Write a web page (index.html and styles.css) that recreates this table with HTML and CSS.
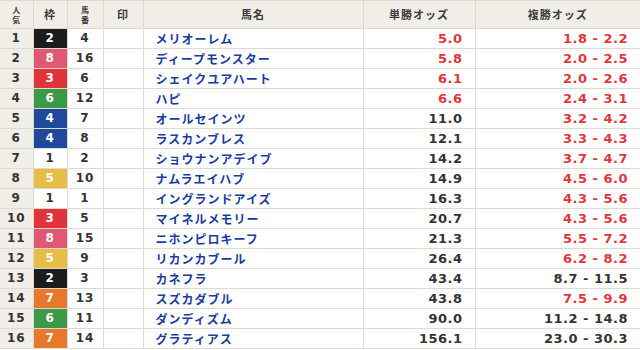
FILE: index.html
```html
<!DOCTYPE html>
<html lang="ja">
<head>
<meta charset="utf-8">
<link rel="stylesheet" href="styles.css">
</head>
<body>
<table class="odds">
  <colgroup>
    <col class="c-pop"><col class="c-frame"><col class="c-num"><col class="c-mark"><col class="c-name"><col class="c-win"><col class="c-place">
  </colgroup>
  <thead>
    <tr>
      <th class="stack"><span class="line">人</span><span class="line">気</span></th>
      <th>枠</th>
      <th class="stack"><span class="line">馬</span><span class="line">番</span></th>
      <th>印</th>
      <th>馬名</th>
      <th>単勝オッズ</th>
      <th>複勝オッズ</th>
    </tr>
  </thead>
  <tbody>
    <tr><td class="pop">1</td><td class="frame f2">2</td><td class="num">4</td><td></td><td class="name">メリオーレム</td><td class="odds-win hot">5.0</td><td class="odds-place hot">1.8 - 2.2</td></tr>
    <tr><td class="pop">2</td><td class="frame f8">8</td><td class="num">16</td><td></td><td class="name">ディープモンスター</td><td class="odds-win hot">5.8</td><td class="odds-place hot">2.0 - 2.5</td></tr>
    <tr><td class="pop">3</td><td class="frame f3">3</td><td class="num">6</td><td></td><td class="name">シェイクユアハート</td><td class="odds-win hot">6.1</td><td class="odds-place hot">2.0 - 2.6</td></tr>
    <tr><td class="pop">4</td><td class="frame f6">6</td><td class="num">12</td><td></td><td class="name">ハピ</td><td class="odds-win hot">6.6</td><td class="odds-place hot">2.4 - 3.1</td></tr>
    <tr><td class="pop">5</td><td class="frame f4">4</td><td class="num">7</td><td></td><td class="name">オールセインツ</td><td class="odds-win">11.0</td><td class="odds-place hot">3.2 - 4.2</td></tr>
    <tr><td class="pop">6</td><td class="frame f4">4</td><td class="num">8</td><td></td><td class="name">ラスカンブレス</td><td class="odds-win">12.1</td><td class="odds-place hot">3.3 - 4.3</td></tr>
    <tr><td class="pop">7</td><td class="frame f1">1</td><td class="num">2</td><td></td><td class="name">ショウナンアデイブ</td><td class="odds-win">14.2</td><td class="odds-place hot">3.7 - 4.7</td></tr>
    <tr><td class="pop">8</td><td class="frame f5">5</td><td class="num">10</td><td></td><td class="name">ナムラエイハブ</td><td class="odds-win">14.9</td><td class="odds-place hot">4.5 - 6.0</td></tr>
    <tr><td class="pop">9</td><td class="frame f1">1</td><td class="num">1</td><td></td><td class="name">イングランドアイズ</td><td class="odds-win">16.3</td><td class="odds-place hot">4.3 - 5.6</td></tr>
    <tr><td class="pop">10</td><td class="frame f3">3</td><td class="num">5</td><td></td><td class="name">マイネルメモリー</td><td class="odds-win">20.7</td><td class="odds-place hot">4.3 - 5.6</td></tr>
    <tr><td class="pop">11</td><td class="frame f8">8</td><td class="num">15</td><td></td><td class="name">ニホンピロキーフ</td><td class="odds-win">21.3</td><td class="odds-place hot">5.5 - 7.2</td></tr>
    <tr><td class="pop">12</td><td class="frame f5">5</td><td class="num">9</td><td></td><td class="name">リカンカブール</td><td class="odds-win">26.4</td><td class="odds-place hot">6.2 - 8.2</td></tr>
    <tr><td class="pop">13</td><td class="frame f2">2</td><td class="num">3</td><td></td><td class="name">カネフラ</td><td class="odds-win">43.4</td><td class="odds-place">8.7 - 11.5</td></tr>
    <tr><td class="pop">14</td><td class="frame f7">7</td><td class="num">13</td><td></td><td class="name">スズカダブル</td><td class="odds-win">43.8</td><td class="odds-place hot">7.5 - 9.9</td></tr>
    <tr><td class="pop">15</td><td class="frame f6">6</td><td class="num">11</td><td></td><td class="name">ダンディズム</td><td class="odds-win">90.0</td><td class="odds-place">11.2 - 14.8</td></tr>
    <tr><td class="pop">16</td><td class="frame f7">7</td><td class="num">14</td><td></td><td class="name">グラティアス</td><td class="odds-win">156.1</td><td class="odds-place">23.0 - 30.3</td></tr>
  </tbody>
</table>
</body>
</html>
```
FILE: styles.css
```css
html, body {
  margin: 0;
  padding: 0;
  background: #ffffff;
}
body {
  font-family: "Noto Sans CJK JP", "Noto Sans", sans-serif;
  color: #333333;
  overflow: hidden;
}
.odds {
  width: 640px;
  border-collapse: collapse;
  table-layout: fixed;
}
.c-pop { width: 33px; }
.c-frame { width: 34px; }
.c-num { width: 36px; }
.c-mark { width: 40px; }
.c-name { width: 220px; }
.c-win { width: 112px; }
.c-place { width: 165px; }

.odds th, .odds td {
  border: 1px solid #dedad3;
  padding: 0;
}
.odds tr > :first-child { border-left: none; }
.odds tr > :last-child { border-right: none; }

.odds th {
  background: #f1eee8;
  height: 27px;
  font-size: 11px;
  font-weight: 700;
  color: #3a3a3a;
  text-align: center;
  line-height: 13px;
  letter-spacing: 1px;
}
.odds th.stack {
  font-size: 8px;
  line-height: 10px;
  letter-spacing: 0;
}
.stack .line {
  display: block;
  height: 10px;
  line-height: 10px;
}
.odds td {
  height: 19px;
  font-family: "DejaVu Sans", "Noto Sans CJK JP", sans-serif;
  font-size: 12px;
  font-weight: 700;
  line-height: 19px;
  text-align: center;
  white-space: nowrap;
  letter-spacing: 0.5px;
}
.odds td.pop {
  background: #f1eee8;
  color: #333333;
  letter-spacing: 1px;
}
.odds td.num { color: #333333; letter-spacing: 1px; }
.odds td.name {
  font-family: "Noto Sans CJK JP", sans-serif;
  text-align: left;
  padding-left: 12px;
  color: #1b3c9c;
  letter-spacing: 1px;
  font-size: 12px;
}
.odds td.odds-win,
.odds td.odds-place {
  text-align: right;
  padding-right: 12px;
  color: #333333;
  font-size: 13px;
}
.odds td.hot { color: #e2363c; }

.frame { color: #ffffff; }
.f1 { background: #ffffff; color: #333333; }
.f2 { background: #1c1c1c; }
.f3 { background: #e0343a; }
.f4 { background: #1f4a9c; }
.f5 { background: #e6bd45; }
.f6 { background: #3c9a46; }
.f7 { background: #e7782c; }
.f8 { background: #e05874; }
```
